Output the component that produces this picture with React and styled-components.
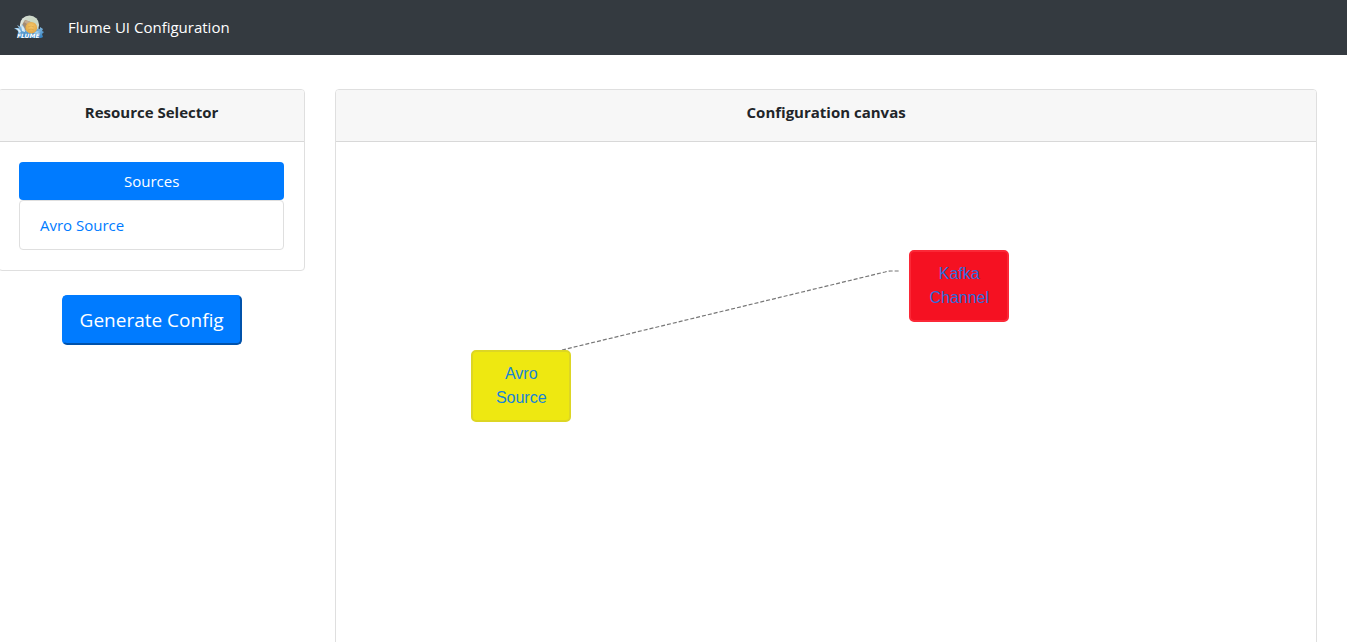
import React from "react";
import styled, { createGlobalStyle } from "styled-components";

const GlobalStyle = createGlobalStyle`
  *, *::before, *::after { box-sizing: border-box; }
  body {
    margin: 0;
    background: #fff;
    color: #212529;
    font-family: "Segoe UI", "Open Sans", "Noto Sans", sans-serif;
    font-size: 15px;
    line-height: 24px;
  }
`;

const Page = styled.div`
  height: 100vh;
  overflow: hidden;
`;

const Navbar = styled.nav`
  display: flex;
  align-items: center;
  gap: 24px;
  height: 55px;
  padding: 0 14px 2px;
  background: #343a40;
`;

const Brand = styled.a`
  display: flex;
`;

const NavLink = styled.a`
  color: #fff;
  text-decoration: none;
`;

const Row = styled.main`
  display: flex;
  align-items: flex-start;
  margin: 34px 15px 0 -17px;
`;

const Column = styled.div`
  flex: 0 0 ${(p) => p.$width};
  padding: 0 15px;
`;

const Card = styled.section`
  border: 1px solid #dfdfdf;
  border-radius: 4px;
  background: #fff;
`;

const CardHeader = styled.h2`
  margin: 0;
  padding: 10px 20px 17px;
  border-bottom: 1px solid #d8d8d8;
  border-radius: 3px 3px 0 0;
  background: #f7f7f7;
  font-size: 15px;
  font-weight: 700;
  line-height: 24px;
  text-align: center;
`;

const CardBody = styled.div`
  padding: 20px;
`;

const GroupButton = styled.button`
  display: block;
  width: 100%;
  padding: 7px 12px;
  border: 0;
  border-radius: 4px;
  background: #007bff;
  color: #fff;
  font: inherit;
  cursor: pointer;
`;

const ResourceList = styled.ul`
  margin: 0;
  padding: 12px 20px;
  border: 1px solid #dfdfdf;
  border-radius: 4px;
  list-style: none;
`;

const ResourceLink = styled.a`
  color: #007bff;
  text-decoration: none;
`;

const Actions = styled.div`
  display: flex;
  justify-content: center;
  margin-top: 24px;
`;

const GenerateButton = styled.button`
  width: 180px;
  height: 50px;
  padding: 0;
  border: 2px outset #007bff;
  border-radius: 5px;
  background: #007bff;
  color: #fff;
  font: inherit;
  font-size: 19px;
  cursor: pointer;
`;

const Canvas = styled.div`
  position: relative;
  min-height: 600px;
`;

const Wires = styled.svg`
  position: absolute;
  inset: 0;
  width: 100%;
  height: 100%;
`;

const Node = styled.a`
  position: absolute;
  left: ${(p) => p.$x}px;
  top: ${(p) => p.$y}px;
  width: 100px;
  padding: 10px 16px;
  border: 2px solid ${(p) => p.$border};
  border-radius: 5px;
  background: ${(p) => p.$fill};
  color: ${(p) => p.$color};
  font-family: "Liberation Sans", Arial, sans-serif;
  font-size: 16px;
  line-height: 24px;
  text-align: center;
  text-decoration: none;
`;

const nodes = [
  { name: "Avro Source", x: 135, y: 208, fill: "#eee811", border: "#ddd624", color: "#1683d8" },
  { name: "Kafka Channel", x: 573, y: 108, fill: "#f51122", border: "#fb2837", color: "#2f6cdb" },
];

function FlumeLogo() {
  return (
    <svg width="30" height="24" viewBox="0 0 30 24" role="img" aria-label="Flume">
      <defs>
        <radialGradient id="globe" cx="0.65" cy="0.4" r="0.7">
          <stop offset="0" stopColor="#c9d8bd" />
          <stop offset="0.6" stopColor="#cfd8cd" />
          <stop offset="1" stopColor="#eef1ec" />
        </radialGradient>
        <radialGradient id="ball" cx="0.5" cy="0.4" r="0.6">
          <stop offset="0" stopColor="#f6ca6c" />
          <stop offset="1" stopColor="#e0a443" />
        </radialGradient>
        <linearGradient id="water" x1="0" y1="0" x2="0" y2="1">
          <stop offset="0" stopColor="#9cc8e6" />
          <stop offset="1" stopColor="#2f7fc0" />
        </linearGradient>
      </defs>
      <circle cx="15.5" cy="10" r="9.6" fill="url(#globe)" />
      <path d="M8 10 L11 5 Q16 6 19 9 L12 16 Z" fill="#a18a74" />
      <path d="M10 7 L12 5 L18 8 L13 9 Z" fill="#c3ab91" />
      <path d="M0 13 L5 13 L3 10 L7 12 L8 9 Q10 11 11 15 Q16 20 21 17 Q23 12 26 14 L26 12 L29 14 L28 16 L30 17 L28 19 L29 22 L27 23 H5 Q3 19 4 16 Z" fill="url(#water)" />
      <path d="M1 13 Q6 13 7 17 L5 18 Q4 14 1 13 Z M7 10 Q11 12 11 17 L8 16 Z" fill="#d8ebf7" />
      <path d="M20 18 Q23 15 27 16 L23 17 L27 18 Q23 19 20 18 Z" fill="#a4d0ee" />
      <circle cx="17.3" cy="12.7" r="5.8" fill="url(#ball)" />
      <path d="M14 12 Q17 10 20 12 M14 15 Q17 13 20 15" fill="none" stroke="#d39a40" strokeWidth="0.5" />
      <text x="3" y="23" fill="#fff" fontFamily="DejaVu Sans, sans-serif" fontSize="6" fontWeight="700" fontStyle="italic">
        FLUME
      </text>
    </svg>
  );
}

export default function App() {
  return (
    <Page>
      <GlobalStyle />
      <Navbar>
        <Brand href="#">
          <FlumeLogo />
        </Brand>
        <NavLink href="#">Flume UI Configuration</NavLink>
      </Navbar>
      <Row>
        <Column $width="25%">
          <Card>
            <CardHeader>Resource Selector</CardHeader>
            <CardBody>
              <GroupButton type="button" aria-expanded="true" aria-controls="sources">
                Sources
              </GroupButton>
              <ResourceList id="sources">
                <li>
                  <ResourceLink href="#avro-source">Avro Source</ResourceLink>
                </li>
              </ResourceList>
            </CardBody>
          </Card>
          <Actions>
            <GenerateButton type="button">Generate Config</GenerateButton>
          </Actions>
        </Column>
        <Column $width="75%">
          <Card>
            <CardHeader>Configuration canvas</CardHeader>
            <Canvas>
              <Wires aria-hidden="true">
                <path
                  d="M226 208 L549 130 Q552 129 555 129 L563 129"
                  fill="none"
                  stroke="#777"
                  strokeWidth="1.2"
                  strokeDasharray="4 2"
                />
              </Wires>
              {nodes.map((n) => (
                <Node key={n.name} href="#" $x={n.x} $y={n.y} $fill={n.fill} $border={n.border} $color={n.color}>
                  {n.name}
                </Node>
              ))}
            </Canvas>
          </Card>
        </Column>
      </Row>
    </Page>
  );
}
